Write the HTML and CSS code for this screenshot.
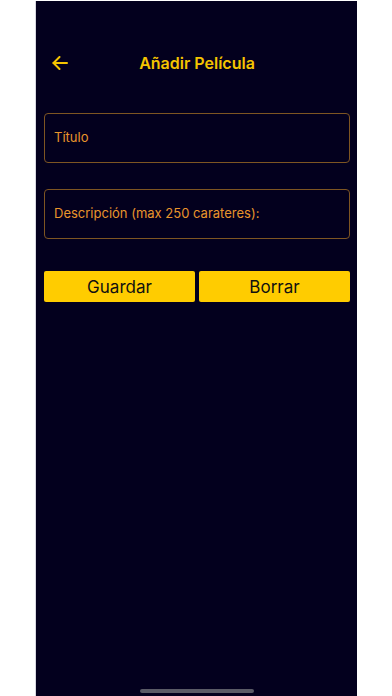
FILE: index.html
```html
<!DOCTYPE html>
<html lang="es">
<head>
    <meta charset="UTF-8">
    <meta name="viewport" content="width=device-width, initial-scale=1.0">
    <title>Añadir Película</title>
    <link rel="stylesheet" href="styles.css">
</head>
<body>
    <div class="screen">
        <header class="header">
            <button class="back" aria-label="Volver">
                <svg width="16" height="14" viewBox="0 0 16 14" fill="none" stroke="currentColor" stroke-width="2" stroke-linecap="round" stroke-linejoin="round">
                    <path d="M15 7H1.5"/>
                    <path d="M7.5 1L1.5 7l6 6"/>
                </svg>
            </button>
            <h1 class="title">Añadir Película</h1>
        </header>

        <form class="form">
            <input class="field" type="text" placeholder="Título">
            <input class="field" type="text" placeholder="Descripción (max 250 carateres):">

            <div class="actions">
                <button type="button" class="btn">Guardar</button>
                <button type="button" class="btn">Borrar</button>
            </div>
        </form>

        <div class="home-bar"></div>
    </div>
</body>
</html>
```

FILE: styles.css
```css
body {
    margin: 0;
    padding-top: 1px;
    background-color: #ffffff;
    font-family: Inter, Roboto, "Noto Sans", sans-serif;
}

.screen {
    position: relative;
    box-sizing: border-box;
    width: 321px;
    height: 695px;
    margin-left: 36px;
    padding: 0 7px 0 8px;
    background-color: #03001e;
    box-shadow: -1px 0 0 #d8d8e0;
}

.header {
    position: relative;
    height: 44px;
    padding-top: 40px;
    display: flex;
    justify-content: center;
    align-items: center;
}

.back {
    position: absolute;
    left: 8px;
    top: 55px;
    padding: 0;
    background: none;
    border: none;
    color: #f5c400;
    display: flex;
}

.title {
    margin: 0;
    color: #f5c400;
    font-size: 16px;
    font-weight: 600;
}

.form {
    margin-top: 28px;
    display: flex;
    flex-direction: column;
}

.field {
    box-sizing: border-box;
    width: 100%;
    height: 50px;
    margin: 0 0 26px 0;
    padding: 0 9px 3px;
    background: transparent;
    border: 1px solid #7e5522;
    border-radius: 4px;
    color: #e8952c;
    font-family: inherit;
    font-size: 13px;
    outline: none;
}

.field::placeholder {
    color: #e8952c;
}

.actions {
    margin-top: 6px;
    display: flex;
    gap: 4px;
}

.btn {
    flex: 1;
    height: 31px;
    padding: 0;
    background-color: #ffcc00;
    border: none;
    border-radius: 2px;
    color: #111111;
    font-family: inherit;
    font-size: 17px;
}

.home-bar {
    position: absolute;
    left: 104px;
    bottom: 3px;
    width: 114px;
    height: 4px;
    border-radius: 2px;
    background-color: #5a5a66;
}
```
